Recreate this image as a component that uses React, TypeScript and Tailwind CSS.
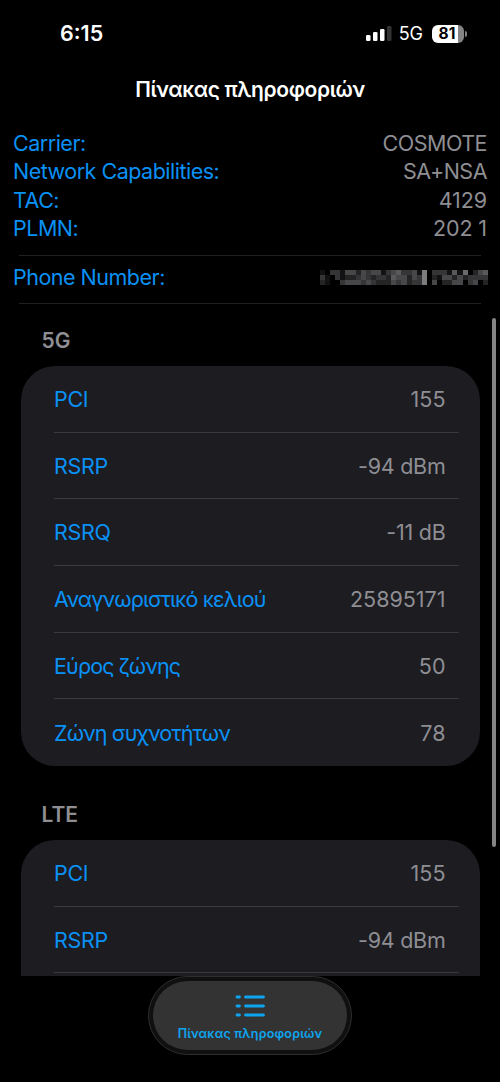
import React from 'react';

interface Entry {
  label: string;
  value: string;
}

const summary: Entry[] = [
  { label: 'Carrier:', value: 'COSMOTE' },
  { label: 'Network Capabilities:', value: 'SA+NSA' },
  { label: 'TAC:', value: '4129' },
  { label: 'PLMN:', value: '202 1' },
];

const nrRows: Entry[] = [
  { label: 'PCI', value: '155' },
  { label: 'RSRP', value: '-94 dBm' },
  { label: 'RSRQ', value: '-11 dB' },
  { label: 'Αναγνωριστικό κελιού', value: '25895171' },
  { label: 'Εύρος ζώνης', value: '50' },
  { label: 'Ζώνη συχνοτήτων', value: '78' },
];

const lteRows: Entry[] = [
  { label: 'PCI', value: '155' },
  { label: 'RSRP', value: '-94 dBm' },
];

// brightness of each mosaic cell, 0-9
const mosaic = [
  '103314424344134533417033315160245',
  '310312234323325442437021442423333',
  '210034443432224342337040224403402',
];

const isGreek = (text: string) => /[α-ω]/.test(text);
const isNumber = (text: string) => /^[\d ]+$/.test(text);

const Battery: React.FC = () => (
  <div className="ml-2 flex items-center">
    <div className="flex h-[18px] w-8 items-center justify-center rounded-[6px] bg-linear-to-r from-white from-81% to-[#858585] to-81% pr-[2px] text-[15.5px] font-bold text-black">
      81
    </div>
    <div className="ml-px h-[6px] w-[2px] rounded-r-full bg-[#858585]" />
  </div>
);

const StatusBar: React.FC = () => (
  <div className="flex h-[67px] items-center justify-between pl-[60px] pr-[33px]">
    <span className="text-[21.5px] font-semibold text-white">6:15</span>
    <div className="flex items-center">
      <svg width="26" height="16" viewBox="0 0 26 16" fill="#fff">
        <rect x="0" y="9" width="4.5" height="6" rx="1.3" />
        <rect x="7" y="6" width="4.5" height="9" rx="1.3" />
        <rect x="14" y="3" width="4.5" height="12" rx="1.3" />
        <rect x="21" y="0" width="4.5" height="15" rx="1.3" fill="#333" />
      </svg>
      <span className="ml-[7px] mr-px text-[18px] text-white">5G</span>
      <Battery />
    </div>
  </div>
);

const Mosaic: React.FC = () => (
  <svg width="168" height="15" viewBox="0 0 33 3" preserveAspectRatio="none" shapeRendering="crispEdges">
    {mosaic.map((line, y) =>
      line.split('').map((level, x) => (
        <rect key={`${x}-${y}`} x={x} y={y} width="1" height="1" fill="#a0a0a4" opacity={Number(level) / 9} />
      ))
    )}
  </svg>
);

const Section: React.FC<{ title: string; rows: Entry[]; more?: boolean }> = ({ title, rows, more }) => (
  <section>
    <h2 className="ml-[41.5px] text-[21px] leading-[26px] font-semibold text-[#8e8e93]">{title}</h2>
    <div className="mr-[20.5px] ml-[20.5px] mt-3 rounded-[34px] bg-[#1c1c21] pr-[21px] pl-[33.5px]">
      {rows.map((row, i) => (
        <div
          key={row.label}
          className={`flex h-[66.67px] items-center justify-between pt-px pr-[13px] text-[21.5px] ${more || i < rows.length - 1 ? 'border-b border-[#39393e]' : ''}`}
        >
          <span className={`text-[#0a91f5] ${isGreek(row.label) ? 'tracking-[-0.87px]' : 'tracking-[-0.3px]'}`}>
            {row.label}
          </span>
          <span className={`text-[#8e8e93] ${isNumber(row.value) ? '' : 'tracking-[-0.25px]'}`}>{row.value}</span>
        </div>
      ))}
      {more && <div className="h-[66px]" />}
    </div>
  </section>
);

const TabBar: React.FC = () => (
  <nav className="flex h-[106px] justify-center">
    <div className="h-[79px] w-[204px] rounded-full border border-[#2e2e2e] bg-[#101010] p-1">
      <button className="flex h-full w-full flex-col items-center rounded-full bg-[#333] pt-[14px] text-[#0ea5f0]">
        <svg width="30" height="22" viewBox="0 0 30 22" stroke="currentColor" strokeWidth="2.8" strokeLinecap="round">
          <path d="M2 2h2.500M2 11h2.500M2 20h2.500M10.500 2h18M10.500 11h18M10.500 20h18" />
        </svg>
        <span className="mt-[9px] text-[12.5px] leading-4 font-semibold tracking-[0.2px]">Πίνακας πληροφοριών</span>
      </button>
    </div>
  </nav>
);

const App: React.FC = () => {
  return (
    <div className="relative flex h-[1082px] w-[500px] flex-col overflow-hidden bg-black font-['Inter',sans-serif]">
      <StatusBar />
      <h1 className="mt-[9px] text-center text-[21px] leading-7 font-semibold tracking-[-0.37px] text-white">
        Πίνακας πληροφοριών
      </h1>

      <dl className="mt-[24.5px] px-[13px] text-[21.5px] tracking-[-0.5px]">
        {summary.map((row) => (
          <div key={row.label} className="flex h-[28.6px] items-center justify-between">
            <dt className="text-[#0a91f5]">{row.label}</dt>
            <dd className={`text-[#8e8e93] ${isNumber(row.value) ? 'tracking-[-0.1px]' : ''}`}>{row.value}</dd>
          </div>
        ))}
      </dl>
      <hr className="mx-[19px] mt-[12.1px] border-[#202022]" />
      <div className="flex h-[47px] items-center justify-between pr-3 pb-[4px] pl-[13px]">
        <span className="text-[21.5px] tracking-[-0.5px] text-[#0a91f5]">Phone Number:</span>
        <Mosaic />
      </div>
      <hr className="mx-[19px] border-[#202022]" />

      <main className="min-h-0 flex-1 overflow-hidden pt-6">
        <Section title="5G" rows={nrRows} />
        <div className="mt-[36px]">
          <Section title="LTE" rows={lteRows} more />
        </div>
      </main>
      <TabBar />

      <div className="absolute top-[318px] right-[4px] h-[529px] w-[4px] rounded-full bg-[#848484]" />
    </div>
  );
};

export default App;
